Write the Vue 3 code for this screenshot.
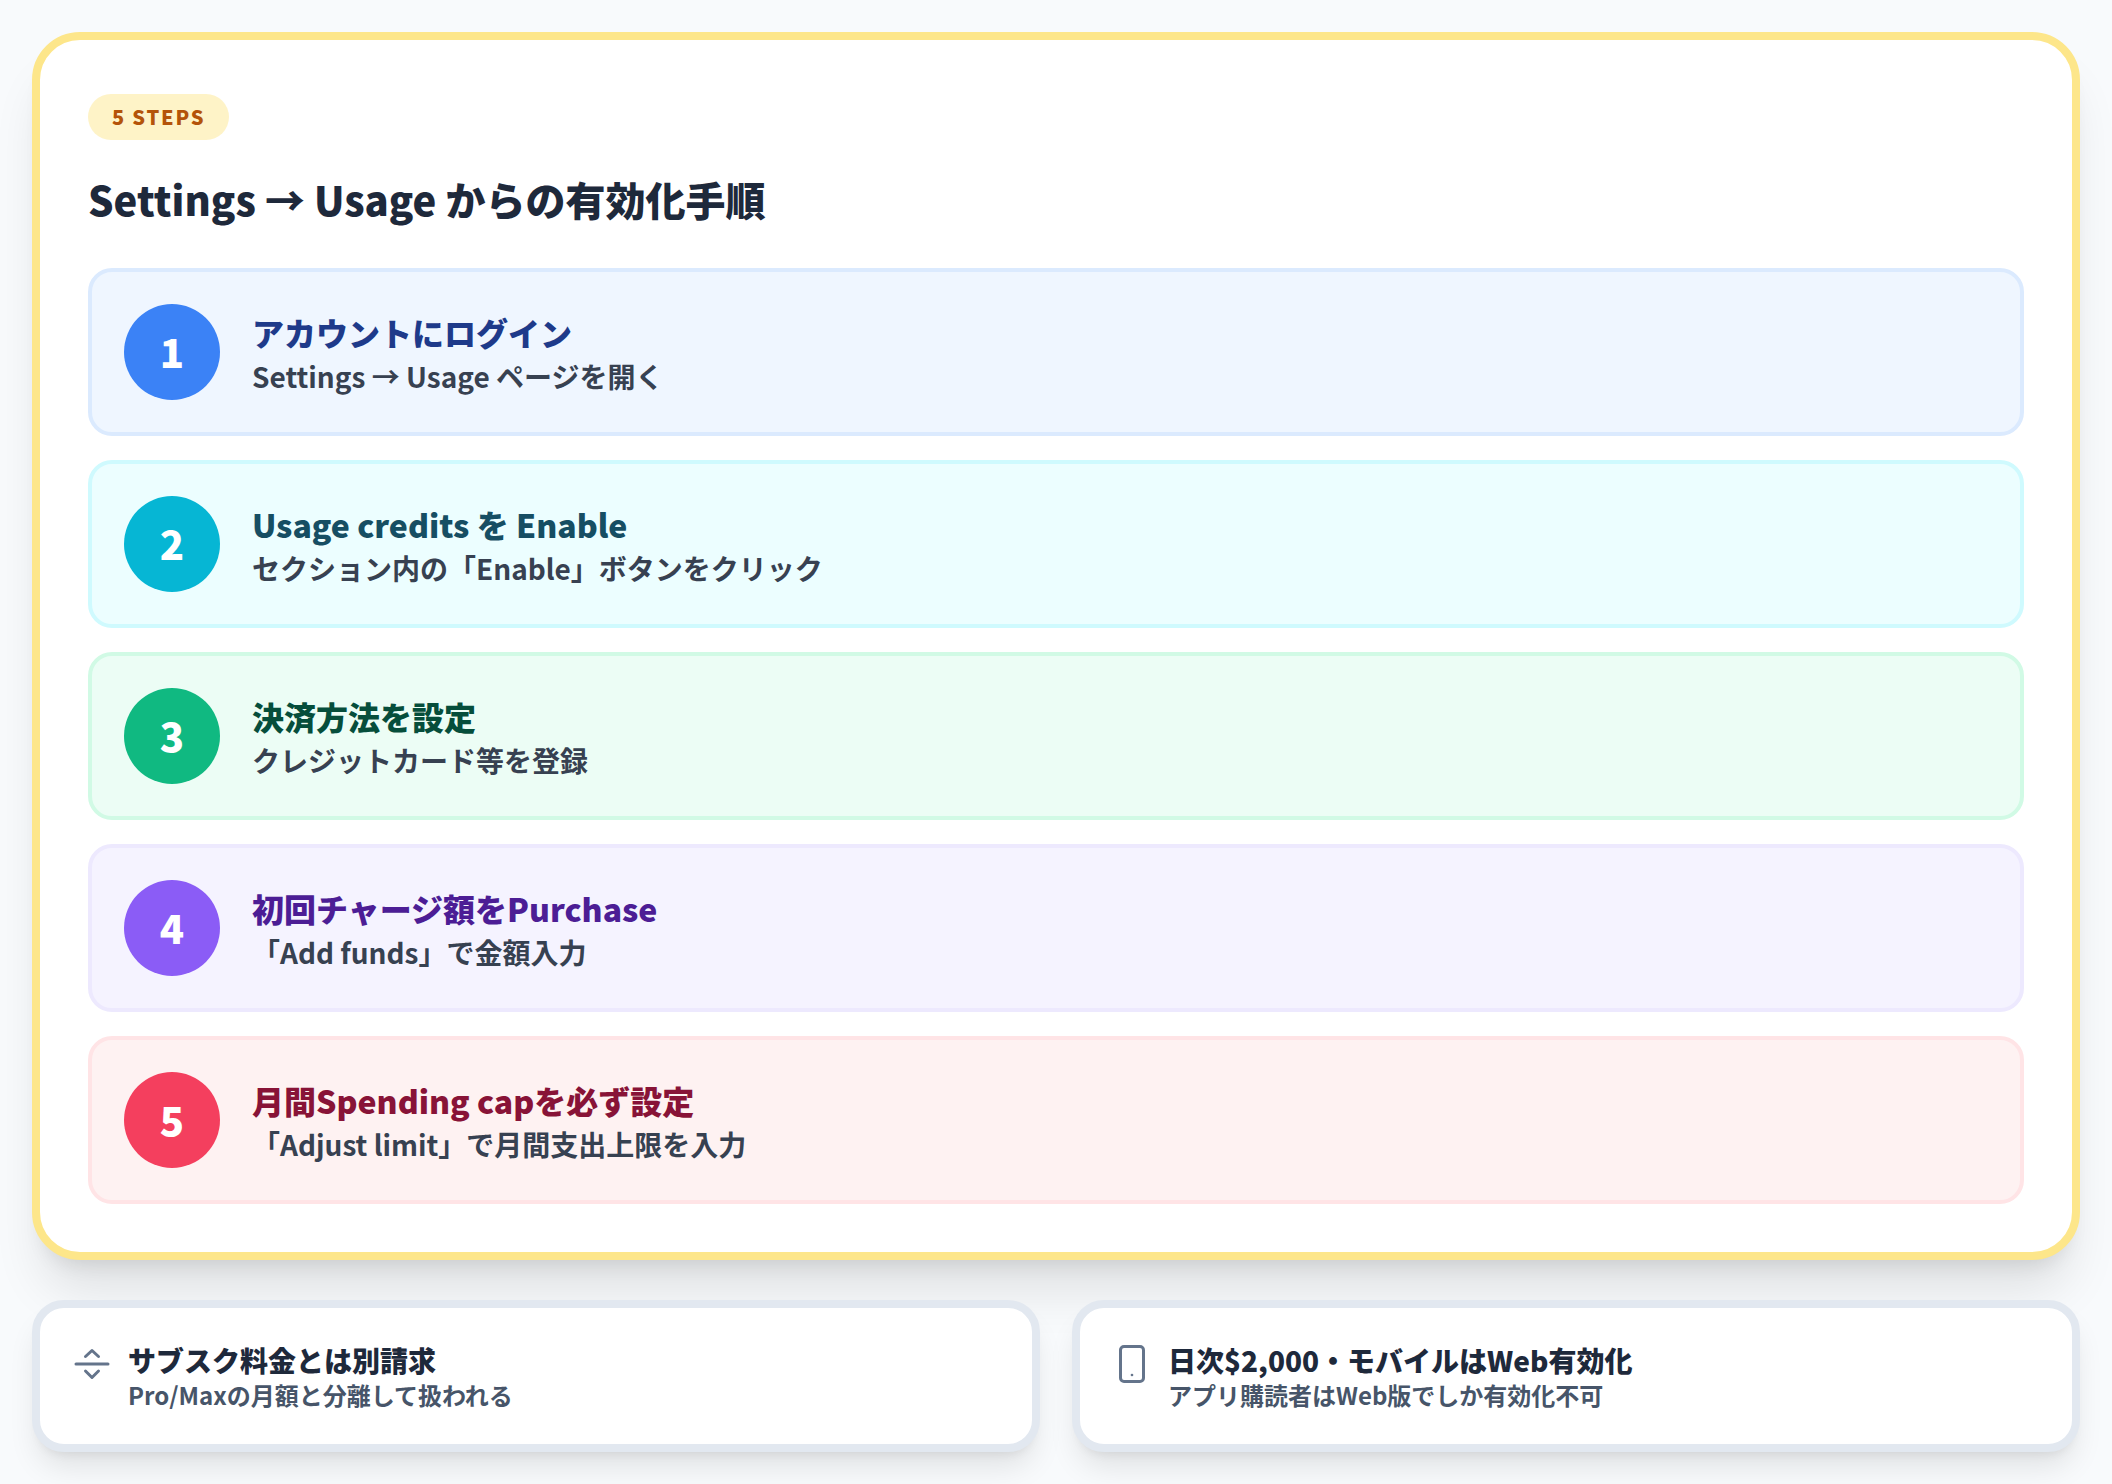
<script setup>
const steps = [
  { no: 1, kind: 'blue', title: 'アカウントにログイン', text: 'Settings → Usage ページを開く' },
  { no: 2, kind: 'cyan', title: 'Usage credits を Enable', text: 'セクション内の「Enable」ボタンをクリック' },
  { no: 3, kind: 'green', title: '決済方法を設定', text: 'クレジットカード等を登録' },
  { no: 4, kind: 'violet', title: '初回チャージ額をPurchase', text: '「Add funds」で金額入力' },
  { no: 5, kind: 'rose', title: '月間Spending capを必ず設定', text: '「Adjust limit」で月間支出上限を入力' },
]
</script>

<template>
  <main class="page">
    <section class="card">
      <span class="badge">5 STEPS</span>
      <h1>Settings → Usage からの有効化手順</h1>
      <ol class="steps">
        <li v-for="s in steps" :key="s.no" class="step" :class="s.kind">
          <span class="num">{{ s.no }}</span>
          <div class="step-body">
            <h2>{{ s.title }}</h2>
            <p>{{ s.text }}</p>
          </div>
        </li>
      </ol>
    </section>

    <div class="notes">
      <div class="note">
        <svg class="icon" viewBox="0 0 40 40" fill="none" stroke="#64748b" stroke-width="3" stroke-linecap="round" stroke-linejoin="round">
          <path d="M13.5 12.5 L20 6.5 L26.5 12.5" />
          <path d="M4 20 H36" />
          <path d="M13.5 27 L20 33.5 L26.5 27" />
        </svg>
        <div class="note-body">
          <h3>サブスク料金とは別請求</h3>
          <p>Pro/Maxの月額と分離して扱われる</p>
        </div>
      </div>
      <div class="note">
        <svg class="icon" viewBox="0 0 40 40" fill="none" stroke="#64748b" stroke-width="3" stroke-linecap="round" stroke-linejoin="round">
          <rect x="8.5" y="2.5" width="23" height="35" rx="3.5" />
          <circle cx="20" cy="31" r="0.6" fill="#64748b" stroke-width="1.5" />
        </svg>
        <div class="note-body">
          <h3>日次$2,000・モバイルはWeb有効化</h3>
          <p>アプリ購読者はWeb版でしか有効化不可</p>
        </div>
      </div>
    </div>
  </main>
</template>

<style>
html,
body {
  margin: 0;
  background: #f8fafc;
}
</style>

<style scoped>
.page {
  box-sizing: border-box;
  width: 2112px;
  height: 1484px;
  padding: 32px;
  display: flex;
  flex-direction: column;
  gap: 40px;
  font-family: "Noto Sans CJK JP", "Noto Sans", sans-serif;
  color: #1e293b;
  background: #f8fafc;
}

.card {
  box-sizing: border-box;
  height: 1228px;
  padding: 54px 48px 48px;
  background: #fff;
  border: 8px solid #fde68a;
  border-radius: 48px;
  box-shadow: 0 40px 50px -10px rgba(0, 0, 0, 0.1), 0 16px 20px -12px rgba(0, 0, 0, 0.1);
}

.badge {
  display: block;
  width: fit-content;
  height: 46px;
  padding: 0 24px;
  line-height: 46px;
  font-size: 20px;
  font-weight: 900;
  letter-spacing: 1.8px;
  color: #b45309;
  background: #fef3c7;
  border-radius: 23px;
}

h1 {
  margin: 33px 0 43px;
  font-size: 40px;
  line-height: 52px;
  font-weight: 900;
  color: #1e293b;
}

.steps {
  list-style: none;
  margin: 0;
  padding: 0;
  display: flex;
  flex-direction: column;
  gap: 24px;
}

.step {
  box-sizing: border-box;
  height: 168px;
  padding: 32px;
  display: flex;
  align-items: center;
  gap: 32px;
  border: 4px solid;
  border-radius: 24px;
}

.num {
  flex: none;
  box-sizing: border-box;
  width: 96px;
  height: 96px;
  padding-bottom: 2px;
  display: flex;
  align-items: center;
  justify-content: center;
  border-radius: 50%;
  color: #fff;
  font-size: 40px;
  font-weight: 900;
}

.step-body {
  padding-top: 4px;
}

.step-body h2 {
  margin: 0;
  font-size: 32px;
  line-height: 44px;
  font-weight: 900;
}

.step-body p {
  margin: 0;
  font-size: 28px;
  line-height: 44px;
  font-weight: 700;
  color: #374151;
}

.blue { background: #eff6ff; border-color: #dbeafe; }
.blue .num { background: #3b82f6; }
.blue h2 { color: #1e3a8a; }
.cyan { background: #ecfeff; border-color: #cffafe; }
.cyan .num { background: #06b6d4; }
.cyan h2 { color: #164e63; }
.green { background: #ecfdf5; border-color: #d1fae5; }
.green .num { background: #10b981; }
.green h2 { color: #064e3b; }
.violet { background: #f5f3ff; border-color: #ede9fe; }
.violet .num { background: #8b5cf6; }
.violet h2 { color: #4c1d95; }
.rose { background: #fef2f2; border-color: #ffe4e6; }
.rose .num { background: #f43f5e; }
.rose h2 { color: #881337; }

.notes {
  display: grid;
  grid-template-columns: 1fr 1fr;
  gap: 32px;
}

.note {
  box-sizing: border-box;
  height: 152px;
  padding: 32px;
  display: flex;
  align-items: center;
  gap: 16px;
  background: #fff;
  border: 8px solid #e2e8f0;
  border-radius: 32px;
  box-shadow: 0 20px 30px -6px rgba(0, 0, 0, 0.1), 0 8px 12px -8px rgba(0, 0, 0, 0.1);
}

.icon {
  flex: none;
  width: 40px;
  height: 40px;
  margin-top: -24px;
}

.note-body {
  padding-top: 2px;
}

.note h3 {
  margin: 0;
  font-size: 28px;
  line-height: 36px;
  font-weight: 900;
  color: #1e293b;
}

.note p {
  margin: 0;
  font-size: 24px;
  line-height: 34px;
  font-weight: 700;
  color: #475569;
}
</style>
